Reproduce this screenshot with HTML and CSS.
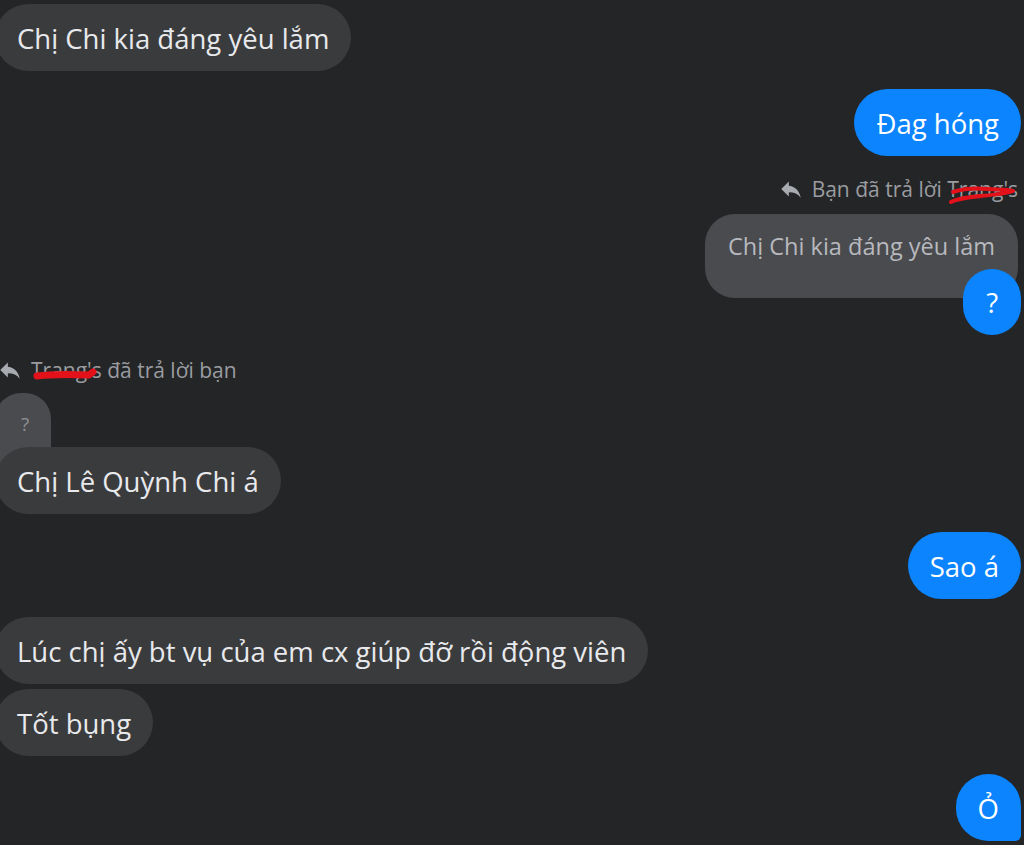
FILE: index.html
```html
<!DOCTYPE html>
<html lang="vi">
<head>
<meta charset="utf-8">
<title>Chat</title>
<link rel="stylesheet" href="styles.css">
</head>
<body>
<main class="chat">
  <div class="row left first">
    <div class="bubble in">Chị Chi kia đáng yêu lắm</div>
  </div>
  <div class="row right gap-lg">
    <div class="bubble out">Đag hóng</div>
  </div>

  <div class="reply right">
    <div class="reply-head">
      <svg class="reply-icon" viewBox="0 0 24 24" aria-hidden="true"><path d="M10 9V5l-7 7 7 7v-4.1c5 0 8.5 1.6 11 5.1-1-5-4-10-11-11z"/></svg>
      <span class="reply-text">Bạn đã trả lời <span class="name">Trang's<svg class="scribble scribble-r" viewBox="0 0 72 22" aria-hidden="true"><path d="M8 10c10-3 22-4 34-3 10 1 18 0 26 2-8 3-20 4-34 5-10 1-20 2-28 6 8-4 20-5 32-6"/></svg></span></span>
    </div>
    <div class="quoted quoted-text">Chị Chi kia đáng yêu lắm</div>
    <div class="bubble out over">?</div>
  </div>

  <div class="reply left">
    <div class="reply-head">
      <svg class="reply-icon" viewBox="0 0 24 24" aria-hidden="true"><path d="M10 9V5l-7 7 7 7v-4.1c5 0 8.5 1.6 11 5.1-1-5-4-10-11-11z"/></svg>
      <span class="reply-text"><span class="name">Trang<svg class="scribble scribble-l" viewBox="0 0 64 16" aria-hidden="true"><path d="M4 10c14-2 30-2 52-1l4-3"/></svg></span>'s đã trả lời bạn</span>
    </div>
    <div class="quoted quoted-small">?</div>
    <div class="bubble in over">Chị Lê Quỳnh Chi á</div>
  </div>

  <div class="row right gap-lg">
    <div class="bubble out">Sao á</div>
  </div>
  <div class="row left gap-lg">
    <div class="bubble in">Lúc chị ấy bt vụ của em cx giúp đỡ rồi động viên</div>
  </div>
  <div class="row left gap-sm">
    <div class="bubble in">Tốt bụng</div>
  </div>
  <div class="row right gap-lg">
    <div class="bubble out last">Ỏ</div>
  </div>
</main>
</body>
</html>
```

FILE: styles.css
```css
* { box-sizing: border-box; }

html, body {
  margin: 0;
  padding: 0;
  background: #242526;
  height: 100%;
  overflow: hidden;
}

body {
  font-family: "Open Sans", "Noto Sans", "DejaVu Sans", sans-serif;
  color: #e4e6eb;
}

.chat {
  display: flex;
  flex-direction: column;
  padding: 4px 3px 0 0;
}

.row {
  display: flex;
}

.row.left { justify-content: flex-start; }
.row.right { justify-content: flex-end; }

.gap-lg { margin-top: 18px; }
.gap-sm { margin-top: 5px; }

.bubble {
  font-size: 27.5px;
  line-height: 33px;
  padding: 18px 22px 16px;
  border-radius: 34px;
  white-space: nowrap;
}

.bubble.in {
  background: #3a3b3d;
  color: #e8e9ec;
  margin-left: -5px;
}

.bubble.out {
  background: #0b84fe;
  color: #ffffff;
}

.bubble.last {
  border-bottom-right-radius: 6px;
}

.reply {
  display: flex;
  flex-direction: column;
}

.reply.right {
  align-items: flex-end;
  margin-top: 19px;
}

.reply.left {
  align-items: flex-start;
  margin-top: 21px;
}

.reply-head {
  display: flex;
  align-items: center;
  gap: 8px;
  height: 28px;
  font-size: 21px;
  color: #9a9ca1;
}

.reply.right .reply-head { margin-right: 3px; }

.reply-icon {
  width: 26px;
  height: 26px;
  fill: #a8abb0;
}

.reply.left .reply-icon { margin-left: -3px; }

.name {
  position: relative;
}

.scribble {
  position: absolute;
  fill: none;
  stroke: #e3121a;
  stroke-linecap: round;
  stroke-linejoin: round;
}

.scribble-r {
  left: -2px;
  top: 7px;
  width: 72px;
  height: 22px;
  stroke-width: 4;
}

.scribble-l {
  left: 2px;
  top: 10px;
  width: 64px;
  height: 16px;
  stroke-width: 7;
}

.quoted {
  background: #4a4b4e;
  color: #b7b9be;
  white-space: nowrap;
}

.quoted-text {
  margin-top: 11px;
  margin-right: 3px;
  font-size: 23.5px;
  line-height: 30px;
  padding: 17px 23px 37px 23px;
  border-radius: 30px;
}

.quoted-small {
  margin-top: 9px;
  margin-left: -5px;
  width: 56px;
  height: 80px;
  padding: 16px 0 0 26px;
  font-size: 19px;
  line-height: 30px;
  border-radius: 26px;
  color: #8e9095;
}

.bubble.over {
  position: relative;
}

.reply.right .bubble.over {
  margin-top: -29px;
  padding: 17px 23px 16px;
  border-radius: 30px;
}

.reply.left .bubble.over {
  margin-top: -26px;
}
```
